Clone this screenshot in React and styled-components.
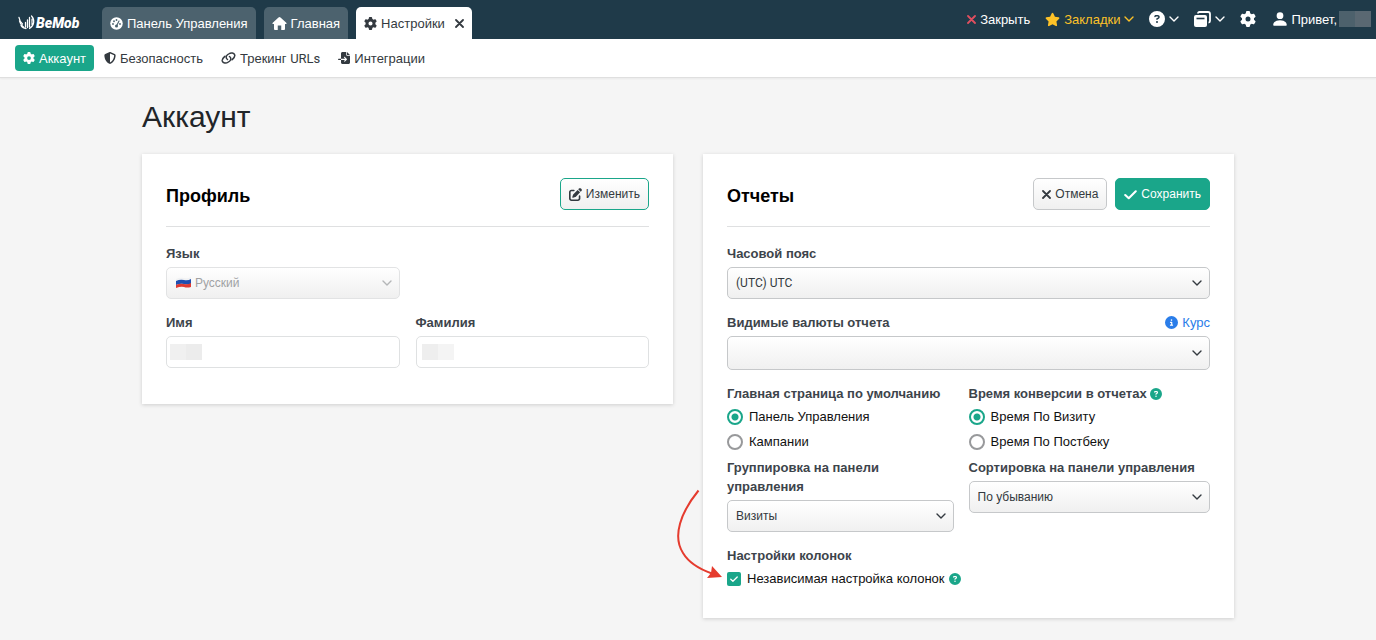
import React from "react";
import styled, { createGlobalStyle, css } from "styled-components";
import {
  FaGear,
  FaStar,
  FaCircleQuestion,
  FaCircleInfo,
  FaPenToSquare,
  FaFileImport,
  FaShieldHalved,
} from "react-icons/fa6";
import { BsPersonFill } from "react-icons/bs";

const GlobalStyle = createGlobalStyle`
  *, *::before, *::after { box-sizing: border-box; }
  body {
    margin: 0;
    background: #f5f5f5;
    color: #212529;
    font: 13px/19px "Liberation Sans", Arial, sans-serif;
  }
  button, input, select { font: inherit; }
  svg { flex: none; display: block; }
`;

const Latin = styled.span`
  font-family: Roboto, "Liberation Sans", sans-serif;
`;

const Header = styled.header`
  display: flex;
  justify-content: space-between;
  height: 39px;
  padding: 0 5px 0 18px;
  background: #1f3a49;
  color: #fff;
`;

const HeaderStart = styled.div`
  display: flex;
  align-items: flex-end;
  gap: 20px;
`;

const Logo = styled.a`
  display: flex;
  align-items: center;
  gap: 1px;
  height: 32px;
  width: 64px;
  color: #fff;
  text-decoration: none;
  font: italic 900 14px/20px Roboto, sans-serif;
`;

const Tabs = styled.nav`
  display: flex;
  gap: 8px;
`;

const Tab = styled.div`
  display: flex;
  align-items: center;
  gap: 10px;
  height: 32px;
  padding: 0 8px;
  border-radius: 5px 5px 0 0;
  background: ${(p) => (p.$active ? "#fff" : "#4c626e")};
  color: ${(p) => (p.$active ? "#343a40" : "#fff")};
`;

const IconLink = styled.a`
  display: flex;
  align-items: center;
  gap: 4px;
  color: inherit;
  text-decoration: none;
  white-space: nowrap;
`;

const BareButton = styled.button`
  display: flex;
  align-items: center;
  gap: 4px;
  padding: 0;
  border: 0;
  background: none;
  color: ${(p) => p.$color || "inherit"};
  white-space: nowrap;
`;

const Tools = styled.div`
  display: flex;
  align-items: center;
  gap: 15px;
  height: 38px;
`;

const User = styled.div`
  display: flex;
  align-items: center;
  gap: 2px;
`;

const Redacted = styled.span`
  width: 32px;
  height: 16px;
  background: linear-gradient(90deg, #4d616c 50%, #5a6872 50%);
`;

const SubNav = styled.nav`
  display: flex;
  align-items: center;
  gap: 2px;
  height: 39px;
  padding: 0 15px;
  background: #fff;
  border-bottom: 1px solid #dfdfdf;
  box-shadow: 0 1px 2px rgba(0, 0, 0, 0.05);
`;

const SubLink = styled(IconLink)`
  height: 26px;
  padding: 0 8px;
  border-radius: 4px;
  color: #343a40;
  ${(p) => p.$active && css`
    background: #1aa68a;
    color: #fff;
  `}
`;

const Page = styled.main`
  max-width: 1092px;
  margin: 0 auto;
  padding: 21px 0;
`;

const Title = styled.h1`
  margin: 0 0 19px;
  font-size: 30px;
  line-height: 36px;
  font-weight: 400;
`;

const Columns = styled.div`
  display: grid;
  grid-template-columns: 1fr 1fr;
  gap: 30px;
  align-items: start;
`;

const Card = styled.section`
  position: relative;
  padding: 24px 24px ${(p) => (p.$compact ? 27 : 36)}px;
  background: #fff;
  box-shadow: 0 1px 4px rgba(0, 0, 0, 0.16);
`;

const CardHead = styled.div`
  display: flex;
  align-items: center;
  gap: 8px;
  padding-bottom: 16px;
  margin-bottom: 17px;
  border-bottom: 1px solid #dfe0e1;
`;

const CardTitle = styled.h2`
  flex: 1;
  margin: 4px 0 0;
  font-size: 18px;
  line-height: 24px;
  color: #000;
`;

const Button = styled.button`
  display: flex;
  align-items: center;
  gap: 4px;
  height: 32px;
  padding: 0 8px;
  border: 1px solid ${(p) => (p.$variant ? "#1aa68a" : "#c6c8ca")};
  border-radius: 5px;
  background: ${(p) =>
    p.$variant === "primary" ? "#1aa68a" : "linear-gradient(#fff, #f0f0f0)"};
  color: ${(p) => (p.$variant === "primary" ? "#fff" : "#343a40")};
  font-size: 12px;
`;

const Rows = styled.div`
  display: grid;
  gap: 14px;
`;

const Stack = styled.div`
  display: grid;
  gap: 4px;
`;

const Pair = styled.div`
  display: grid;
  grid-template-columns: 1fr 1fr;
  gap: ${(p) => p.$gap || 0}px;
  align-items: start;
`;

const Half = styled.div`
  padding-right: ${(p) => (p.$inset ? 15 : 0)}px;
`;

const LabelRow = styled.div`
  display: flex;
  align-items: center;
  justify-content: space-between;
  margin-bottom: 4px;
  line-height: 19px;
`;

const Label = styled.label`
  color: #3d444b;
  font-weight: 700;
`;

const Control = styled.div`
  position: relative;
  color: ${(p) => (p.$disabled ? "#b4b6b8" : "#343a40")};
`;

const Select = styled.select`
  display: block;
  appearance: none;
  width: 100%;
  height: ${(p) => (p.$tall ? 34 : 32)}px;
  padding: 0 28px 0 ${(p) => (p.$flag ? 28 : 8)}px;
  border: 1px solid #c6c8ca;
  border-radius: 5px;
  background: linear-gradient(#fff, #f0f0f0);
  color: #343a40;
  font-size: 12px;
  font-family: ${(p) => (p.$latin ? "Roboto, sans-serif" : "inherit")};
  opacity: 1;
  &:disabled {
    border-color: #e2e3e4;
    color: #a0a2a4;
  }
`;

const ChevronSlot = styled.span`
  position: absolute;
  top: 0;
  right: 8px;
  height: 100%;
  display: flex;
  align-items: center;
  pointer-events: none;
`;

const FlagSlot = styled(ChevronSlot)`
  left: 10px;
  right: auto;
`;

const TextInput = styled.input`
  display: block;
  width: 100%;
  height: 32px;
  padding: 0 8px;
  border: 1px solid #dfe1e2;
  border-radius: 5px;
  background: ${(p) => `linear-gradient(90deg, ${p.$mask[0]} 50%, ${p.$mask[1]} 50%)`}
    ${(p) => p.$mask[2]}px 7px / 32px 16px no-repeat #fff;
`;

const Legend = styled.div`
  display: flex;
  align-items: center;
  gap: 3px;
  margin-bottom: 1px;
  color: #3d444b;
  font-weight: 700;
  white-space: nowrap;
`;

const Option = styled.label`
  display: flex;
  align-items: center;
  gap: 6px;
  height: 25px;
  color: #111;
`;

const Radio = styled.input`
  appearance: none;
  width: 16px;
  height: 16px;
  margin: 0;
  border: 2px solid #98999b;
  border-radius: 50%;
  background: #fff;
  &:checked {
    border-color: #1aa68a;
    background: radial-gradient(circle, #1aa68a 3px, #fff 4px);
  }
`;

const CheckRow = styled.div`
  display: flex;
  align-items: center;
  gap: 4px;
`;

const CheckBox = styled.span`
  position: relative;
  display: flex;
  width: 14px;
  height: 14px;
  svg {
    position: absolute;
    inset: 3px;
    color: #fff;
    pointer-events: none;
  }
  input {
    appearance: none;
    width: 14px;
    height: 14px;
    margin: 0;
    border-radius: 2px;
    background: #1aa68a;
  }
`;

const Help = styled(FaCircleQuestion)`
  color: #1aa68a;
`;

const RateLink = styled(IconLink)`
  color: #2a7de9;
`;

const Pointer = styled.svg`
  position: absolute;
  left: -30px;
  bottom: 32px;
`;

const Cross = ({ color = "currentColor" }) => (
  <svg width="9" height="9" viewBox="0 0 18 18" stroke={color} strokeWidth="3.600" strokeLinecap="round">
    <path d="M2 2L16 16M16 2L2 16" />
  </svg>
);

const Tick = ({ size = 13 }) => (
  <svg width={size} height={size} viewBox="0 0 26 26" fill="none" stroke="currentColor" strokeWidth="4.200" strokeLinecap="round" strokeLinejoin="round">
    <path d="M2.500 14L9.500 20.500L23.500 6.500" />
  </svg>
);

const Chevron = () => (
  <svg width="10" height="10" viewBox="0 0 20 20" fill="none" stroke="currentColor" strokeWidth="2.800" strokeLinecap="round" strokeLinejoin="round">
    <path d="M2 6L10 14L18 6" />
  </svg>
);

const LogoMark = () => (
  <svg width="17" height="16" viewBox="0 0 17 16" fill="none" stroke="#fff" strokeLinecap="round">
    <path d="M1 2.500C1.500 6 3 7.500 4.500 9M1.500 6C2 9 3.500 10.500 5.500 12M3 10.500C4.500 13 6.500 13.500 8 13.500" strokeWidth="1.300" />
    <path d="M7.500 7.500v4.500M9.500 5v7.500M11.500 2.500v9.500" strokeWidth="1.300" />
    <path d="M13.500 1C17 4.500 16.500 10.500 11.500 13.500M14 4v5.500" strokeWidth="1.200" />
  </svg>
);

const GaugeIcon = () => (
  <svg width="13" height="13" viewBox="0 0 26 26">
    <circle cx="13" cy="13" r="12.500" fill="#fff" />
    <g fill="#4c626e">
      <circle cx="6" cy="14" r="1.800" />
      <circle cx="8" cy="8.500" r="1.800" />
      <circle cx="13" cy="6" r="1.800" />
      <circle cx="20" cy="14" r="1.800" />
      <circle cx="13" cy="18" r="3" />
    </g>
    <path d="M13 18L18 8" stroke="#4c626e" strokeWidth="2.200" strokeLinecap="round" />
  </svg>
);

const HomeIcon = () => (
  <svg width="15" height="13" viewBox="0 0 30 26" fill="#fff">
    <path d="M15 0Q16 0 17 1L29 12Q30 14 28 14H26V24Q26 26 24 26H18.500V17H11.500V26H6Q4 26 4 24V14H2Q0 14 1 12L13 1Q14 0 15 0Z" />
  </svg>
);

const ChainIcon = () => (
  <svg width="15" height="12" viewBox="0 0 30 24" fill="none" stroke="#343a40" strokeWidth="3" strokeLinecap="round">
    <path d="M13 15C9 12 10 8 13 5.500L16 3.500C20 0.500 26 1.500 27.500 6C28.500 10 26 12 22 15.500" />
    <path d="M17 9C21 12 20 16 17 18.500L14 20.500C10 23.500 4 22.500 2.500 18C1.500 14 4 12 8 8.500" />
  </svg>
);

const WindowsIcon = () => (
  <svg width="17" height="16" viewBox="0 0 17 16">
    <path d="M4 2.500Q4 1 5.500 1H14Q16 1 16 3V10Q16 11.500 14.500 11.500" fill="none" stroke="#fff" strokeWidth="1.800" />
    <path d="M2 4H11Q13 4 13 6V14Q13 16 11 16H2Q0 16 0 14V6Q0 4 2 4Z" fill="#fff" />
    <path d="M2.500 7.500H10.500" stroke="#1f3a49" strokeWidth="1.600" />
  </svg>
);

const RussianFlag = () => (
  <svg width="15" height="13" viewBox="0 0 15 13">
    <path d="M0 2Q4 0 8 1T15 0V4Q11 5 8 4T0 5Z" fill="#f1f2f3" />
    <path d="M0 4Q4 2 8 3T15 2V7Q11 8 8 7T0 8Z" fill="#1f4fb0" />
    <path d="M0 8Q4 6 8 7T15 6V10Q11 11 8 10T0 11Z" fill="#df3b32" />
  </svg>
);

function SelectBox({ id, value, flag, disabled, tall, latin }) {
  return (
    <Control $disabled={disabled}>
      <Select id={id} $flag={!!flag} $tall={tall} $latin={latin} disabled={disabled} defaultValue={value}>
        <option value={value}>{value}</option>
      </Select>
      {flag && <FlagSlot>{flag}</FlagSlot>}
      <ChevronSlot><Chevron /></ChevronSlot>
    </Control>
  );
}

function Field({ id, label, aside, children }) {
  return (
    <div>
      <LabelRow>
        <Label htmlFor={id}>{label}</Label>
        {aside}
      </LabelRow>
      {children}
    </div>
  );
}

function RadioGroup({ name, title, help, options }) {
  return (
    <div role="radiogroup" aria-label={title}>
      <Legend>{title}{help && <Help size={12} />}</Legend>
      {options.map((text, i) => (
        <Option key={text}>
          <Radio type="radio" name={name} defaultChecked={i === 0} />
          {text}
        </Option>
      ))}
    </div>
  );
}

export default function App() {
  return (
    <>
      <GlobalStyle />
      <Header>
        <HeaderStart>
          <Logo href="#"><LogoMark />BeMob</Logo>
          <Tabs>
            <Tab><IconLink href="#"><GaugeIcon />Панель Управления</IconLink></Tab>
            <Tab><IconLink href="#"><HomeIcon />Главная</IconLink></Tab>
            <Tab $active>
              <IconLink href="#"><FaGear size={13} />Настройки</IconLink>
              <BareButton aria-label="Закрыть вкладку"><Cross /></BareButton>
            </Tab>
          </Tabs>
        </HeaderStart>
        <Tools>
          <BareButton><Cross color="#e04f5f" />Закрыть</BareButton>
          <BareButton $color="#fdc228"><FaStar size={15} />Закладки<Chevron /></BareButton>
          <BareButton aria-label="Помощь"><FaCircleQuestion size={16} /><Chevron /></BareButton>
          <BareButton aria-label="Окна"><WindowsIcon /><Chevron /></BareButton>
          <BareButton aria-label="Настройки"><FaGear size={16} /></BareButton>
          <User><BsPersonFill size={18} />Привет,<Redacted /></User>
        </Tools>
      </Header>
      <SubNav>
        <SubLink href="#" $active><FaGear size={12} />Аккаунт</SubLink>
        <SubLink href="#"><FaShieldHalved size={12} />Безопасность</SubLink>
        <SubLink href="#"><ChainIcon /><span>Трекинг <Latin>URLs</Latin></span></SubLink>
        <SubLink href="#"><FaFileImport size={12} />Интеграции</SubLink>
      </SubNav>
      <Page>
        <Title>Аккаунт</Title>
        <Columns>
          <Card>
            <CardHead>
              <CardTitle>Профиль</CardTitle>
              <Button $variant="outline"><FaPenToSquare size={13} />Изменить</Button>
            </CardHead>
            <Rows>
              <Pair $gap={16}>
                <Field id="lang" label="Язык">
                  <SelectBox id="lang" value="Русский" flag={<RussianFlag />} disabled />
                </Field>
              </Pair>
              <Pair $gap={16}>
                <Field id="first" label="Имя">
                  <TextInput id="first" type="text" $mask={["#f0f0f0", "#ececec", 3]} />
                </Field>
                <Field id="last" label="Фамилия">
                  <TextInput id="last" type="text" $mask={["#eeeeee", "#f4f4f4", 5]} />
                </Field>
              </Pair>
            </Rows>
          </Card>
          <Card $compact>
            <CardHead>
              <CardTitle>Отчеты</CardTitle>
              <Button><Cross />Отмена</Button>
              <Button $variant="primary"><Tick />Сохранить</Button>
            </CardHead>
            <Rows>
              <Field id="tz" label="Часовой пояс">
                <SelectBox id="tz" value="(UTC) UTC" latin />
              </Field>
              <Field
                id="currency"
                label="Видимые валюты отчета"
                aside={<RateLink href="#"><FaCircleInfo size={13} />Курс</RateLink>}
              >
                <SelectBox id="currency" value="" tall />
              </Field>
              <Stack>
                <Pair>
                  <RadioGroup name="home" title="Главная страница по умолчанию" options={["Панель Управления", "Кампании"]} />
                  <RadioGroup name="time" title="Время конверсии в отчетах" help options={["Время По Визиту", "Время По Постбеку"]} />
                </Pair>
                <Pair>
                  <Half $inset>
                    <Field id="group" label="Группировка на панели управления">
                      <SelectBox id="group" value="Визиты" />
                    </Field>
                  </Half>
                  <Half>
                    <Field id="sort" label="Сортировка на панели управления">
                      <SelectBox id="sort" value="По убыванию" />
                    </Field>
                  </Half>
                </Pair>
              </Stack>
              <div>
                <Legend>Настройки колонок</Legend>
                <CheckRow>
                  <Option>
                    <CheckBox>
                      <input type="checkbox" defaultChecked />
                      <Tick size={8} />
                    </CheckBox>
                    Независимая настройка колонок
                  </Option>
                  <Help size={12} />
                </CheckRow>
              </div>
            </Rows>
            <Pointer width="52" height="98" viewBox="0 0 52 98" fill="none" aria-hidden="true">
              <path d="M25.500 2.500C8 24 -1 48 10 65C16 75 26 81 39 85.500" stroke="#e53b2e" strokeWidth="2" />
              <path d="M49 89L34 90L38 85L39 78Z" fill="#e53b2e" />
            </Pointer>
          </Card>
        </Columns>
      </Page>
    </>
  );
}
